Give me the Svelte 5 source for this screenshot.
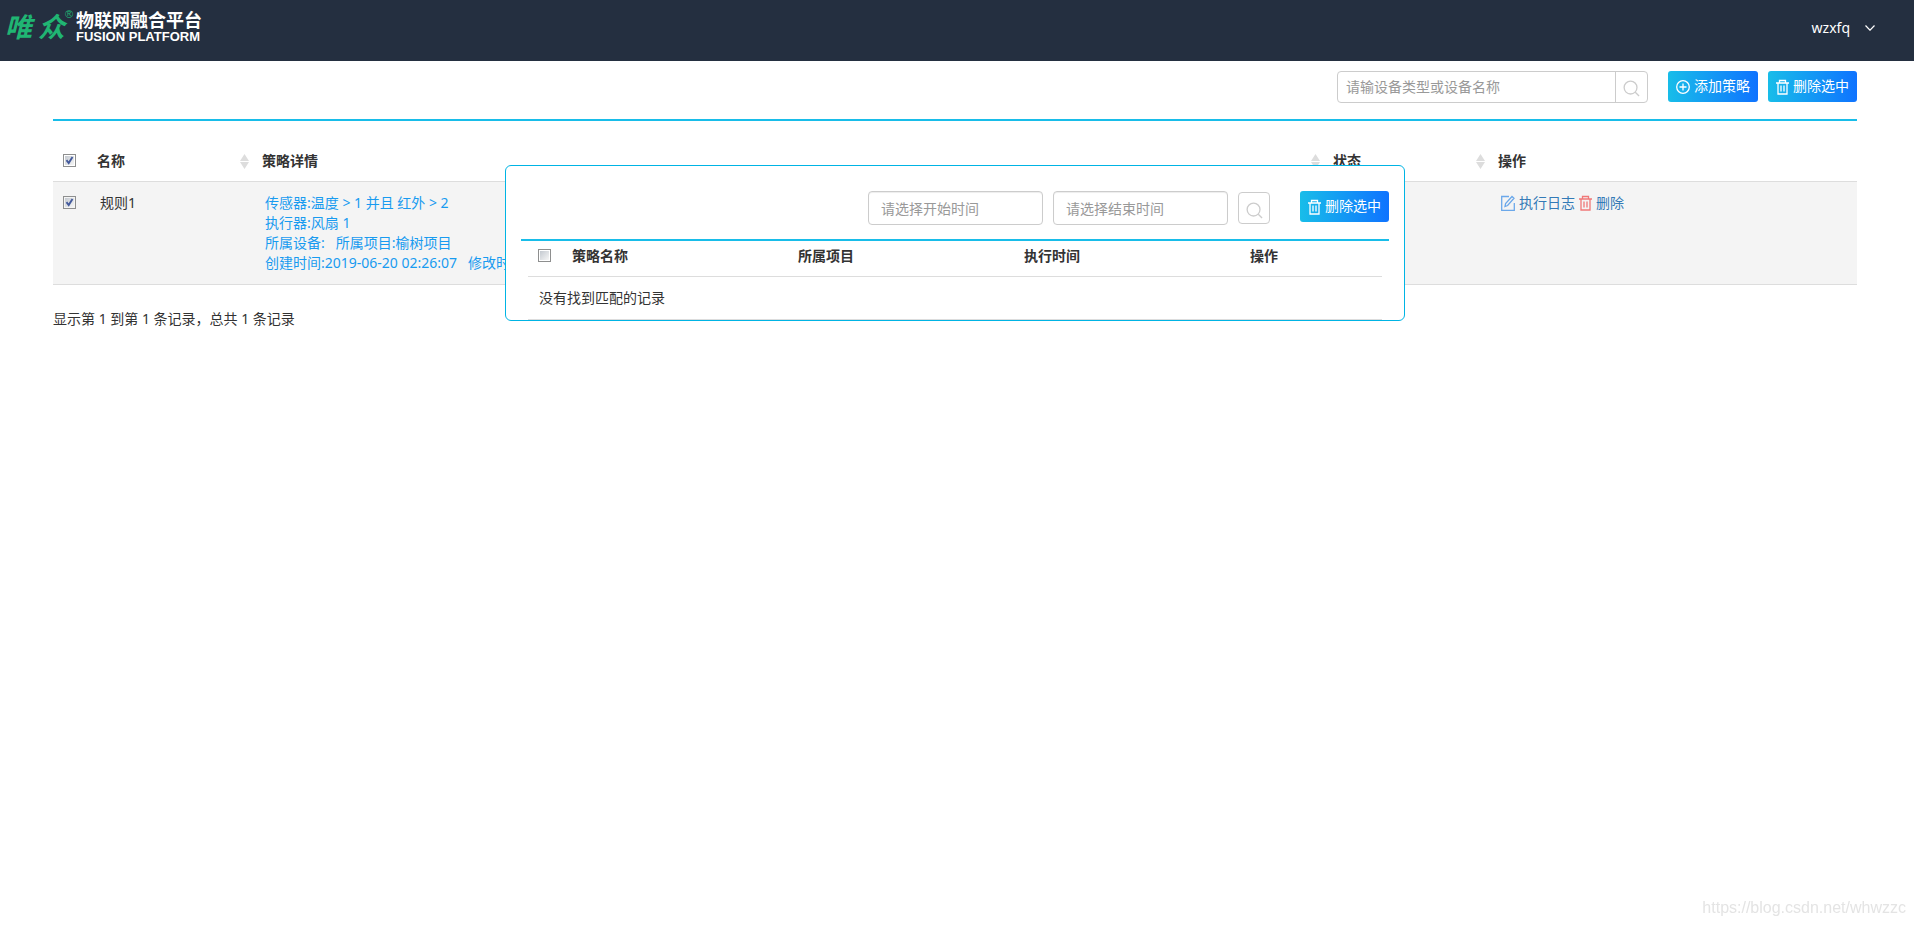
<script>
  let keyword = $state('');
  let start_time = $state('');
  let end_time = $state('');
  let log_checked = $state(false);

  let rules = $state([
    {
      id: 1,
      name: '规则1',
      checked: true,
      sensor: '温度 > 1 并且 红外 > 2',
      actuator: '风扇 1',
      device: '',
      project: '榆树项目',
      created: '2019-06-20 02:26:07',
      updated: ''
    }
  ]);

  let all_checked = $derived(rules.length > 0 && rules.every(r => r.checked));

  function toggle_all() {
    const value = !all_checked;
    rules = rules.map(r => ({ ...r, checked: value }));
  }

  function toggle_rule(id) {
    rules = rules.map(r => (r.id === id ? { ...r, checked: !r.checked } : r));
  }
</script>

{#snippet trash()}
  <svg class="icon trash" viewBox="0 0 13 16" aria-hidden="true">
    <path d="M0 4h13M3.5 4V1.5h6V4M2 4v11h9V4M5 6.500v6M8 6.500v6" />
  </svg>
{/snippet}

{#snippet magnifier()}
  <svg class="magnifier" viewBox="0 0 18 18" aria-hidden="true">
    <circle cx="8" cy="8" r="6.8" />
    <path d="M13 13l4 4" />
  </svg>
{/snippet}

{#snippet sorter()}
  <svg class="sorter" viewBox="0 0 9 15" aria-hidden="true">
    <path d="M4.5 0L9 7H0zM0 8h9l-4.5 7z" />
  </svg>
{/snippet}

<header>
  <div class="logo">
    <span class="mark">唯<span>众</span></span>
    <sup>®</sup>
    <div class="brand">
      <strong>物联网融合平台</strong>
      <b>FUSION PLATFORM</b>
    </div>
  </div>
  <button class="user" type="button">
    wzxfq
    <svg viewBox="0 0 10 6" aria-hidden="true"><path d="M.5 .5L5 5.2L9.5 .5" /></svg>
  </button>
</header>

<main>
  <div class="toolbar">
    <form class="search" onsubmit={e => e.preventDefault()}>
      <input type="text" placeholder="请输设备类型或设备名称" bind:value={keyword} aria-label="设备类型或设备名称">
      <button type="submit" aria-label="搜索">{@render magnifier()}</button>
    </form>
    <div class="buttons">
      <button class="primary" type="button">
        <svg class="icon" viewBox="0 0 14 16" aria-hidden="true">
          <circle cx="7" cy="8" r="6.3" />
          <path d="M7 4.5v7M3.5 8h7" />
        </svg>
        <span>添加策略</span>
      </button>
      <button class="primary" type="button">{@render trash()}<span>删除选中</span></button>
    </div>
  </div>

  <table class="rules">
    <thead>
      <tr>
        <th class="check"><input type="checkbox" checked={all_checked} onclick={toggle_all} aria-label="全选"></th>
        <th class="name"><div class="th-inner">名称{@render sorter()}</div></th>
        <th><div class="th-inner">策略详情{@render sorter()}</div></th>
        <th class="status"><div class="th-inner">状态{@render sorter()}</div></th>
        <th class="actions">操作</th>
      </tr>
    </thead>
    <tbody>
      {#each rules as rule (rule.id)}
        <tr>
          <td class="check">
            <input type="checkbox" checked={rule.checked} onclick={() => toggle_rule(rule.id)} aria-label={rule.name}>
          </td>
          <td>{rule.name}</td>
          <td class="detail">
            传感器:{rule.sensor}<br>
            执行器:{rule.actuator}<br>
            所属设备:{rule.device}&nbsp;&nbsp;&nbsp;所属项目:{rule.project}<br>
            创建时间:{rule.created}&nbsp;&nbsp;&nbsp;修改时间:{rule.updated}
          </td>
          <td></td>
          <td>
            <div class="links">
              <a class="edit" href="#log">
                <svg class="icon" viewBox="0 0 14 16" aria-hidden="true">
                  <path d="M8 1.5H.7v13.8h12.600V8M4 11.500l.6-3L11 1.500l2 1.800-6.400 7.200z" />
                </svg>
                <span>执行日志</span>
              </a>
              <a class="delete" href="#delete">{@render trash()}<span>删除</span></a>
            </div>
          </td>
        </tr>
      {/each}
    </tbody>
  </table>

  <p class="summary">显示第 1 到第 {rules.length} 条记录，总共 {rules.length} 条记录</p>
</main>

<div class="overlay">
  <section class="dialog" role="dialog" aria-label="执行日志">
    <form class="log-bar" onsubmit={e => e.preventDefault()}>
      <input type="text" placeholder="请选择开始时间" bind:value={start_time} aria-label="开始时间">
      <input type="text" placeholder="请选择结束时间" bind:value={end_time} aria-label="结束时间">
      <button class="find" type="submit" aria-label="搜索">{@render magnifier()}</button>
      <button class="primary" type="button">{@render trash()}<span>删除选中</span></button>
    </form>
    <div class="log-body">
      <table class="logs">
        <thead>
          <tr>
            <th class="check"><input type="checkbox" bind:checked={log_checked} aria-label="全选"></th>
            <th class="wide">策略名称</th>
            <th class="wide">所属项目</th>
            <th class="wide">执行时间</th>
            <th>操作</th>
          </tr>
        </thead>
        <tbody>
          <tr><td colspan="5">没有找到匹配的记录</td></tr>
        </tbody>
      </table>
    </div>
  </section>
</div>

<div class="watermark">https://blog.csdn.net/whwzzc</div>

<style>
  :global(body) {
    background: #fff;
    color: #333;
    font: 14px/20px 'Noto Sans', 'Noto Sans CJK SC', sans-serif;
  }

  input,
  button {
    box-sizing: border-box;
    margin: 0;
    font: inherit;
  }

  button {
    cursor: pointer;
  }

  svg {
    display: block;
    flex: none;
    fill: none;
    stroke: currentColor;
  }

  header {
    display: flex;
    justify-content: space-between;
    align-items: flex-start;
    height: 61px;
    box-sizing: border-box;
    padding: 8px 39px 0 5px;
    background: #242f40;
    color: #fff;
  }

  .logo {
    display: flex;
    align-items: flex-start;
  }

  .mark {
    display: flex;
    gap: 6px;
    color: #20b573;
    font: italic bold 27px/36px 'Noto Sans CJK SC', sans-serif;
  }

  sup {
    width: 11px;
    color: #20b573;
    font: 11px/12px 'Liberation Sans', sans-serif;
  }

  .brand {
    display: flex;
    flex-direction: column;
    color: #fff;
  }

  .brand strong {
    font: bold 18px/22px 'Noto Sans CJK SC', sans-serif;
  }

  .brand b {
    font: bold 13px/14px 'Liberation Sans', sans-serif;
  }

  .user {
    display: flex;
    align-items: center;
    gap: 15px;
    margin-top: 10px;
    padding: 0;
    border: 0;
    background: none;
    color: #fff;
  }

  .user svg {
    width: 10px;
    height: 6px;
    stroke-width: 1.2;
  }

  main {
    padding: 10px 57px 0 53px;
  }

  .toolbar {
    display: flex;
    justify-content: flex-end;
    align-items: flex-start;
    gap: 20px;
    padding-bottom: 16px;
    border-bottom: 2px solid #18bde9;
  }

  .search {
    display: flex;
    box-sizing: border-box;
    width: 311px;
    height: 32px;
    border: 1px solid #ccc;
    border-radius: 4px;
  }

  .search input {
    flex: 1;
    min-width: 0;
    padding: 0 8px;
    border: 0;
    background: none;
  }

  .search button {
    display: flex;
    justify-content: center;
    align-items: center;
    width: 32px;
    padding: 2px 0 0;
    border: 0;
    border-left: 1px solid #ccc;
    background: none;
    color: #ccc;
  }

  input::placeholder {
    color: #999;
    opacity: 1;
  }

  .buttons {
    display: flex;
    gap: 10px;
  }

  .primary {
    display: flex;
    align-items: center;
    gap: 4px;
    height: 31px;
    padding: 0 8px;
    border: 0;
    border-radius: 3px;
    background: linear-gradient(to right, #18bde9, #0f73ff);
    color: #fff;
  }

  .primary span {
    padding-bottom: 2px;
  }

  .icon {
    width: 14px;
    height: 16px;
    stroke-width: 1.3;
  }

  .trash {
    width: 13px;
  }

  .magnifier {
    width: 17px;
    height: 17px;
    stroke-width: 1.4;
  }

  table {
    width: 100%;
    border-collapse: separate;
    border-spacing: 0;
    table-layout: fixed;
  }

  th {
    padding: 9px 8px 10px;
    border-bottom: 1px solid #ddd;
    text-align: left;
    vertical-align: top;
  }

  td {
    padding: 11px;
    border-bottom: 1px solid #ddd;
    vertical-align: top;
  }

  .check {
    width: 16px;
    padding-left: 10px;
    padding-right: 10px;
  }

  input[type='checkbox'] {
    display: block;
    appearance: none;
    width: 13px;
    height: 13px;
    margin-top: 3px;
    border: 1px solid #8e8f8f;
    background: linear-gradient(135deg, #c4c9d0, #f6f6f6) content-box #f4f4f4;
    padding: 1px;
  }

  input[type='checkbox']:checked {
    background:
      url("data:image/svg+xml,%3Csvg xmlns='http://www.w3.org/2000/svg' viewBox='0 0 9 9'%3E%3Cpath d='M1.5 4.2L3.7 7L7.5 1' fill='none' stroke='%23445a9c' stroke-width='1.9'/%3E%3C/svg%3E") content-box no-repeat,
      linear-gradient(135deg, #c4c9d0, #f6f6f6) content-box #f4f4f4;
  }

  .rules {
    margin-top: 21px;
  }

  .rules tbody tr {
    background: #f4f4f4;
  }

  .rules .name,
  .rules .status {
    width: 149px;
  }

  .rules .actions {
    width: 351px;
  }

  .th-inner {
    display: flex;
    justify-content: space-between;
    align-items: flex-start;
  }

  .sorter {
    width: 9px;
    height: 15px;
    margin: 3px -3px 0 0;
    fill: #ddd;
    stroke: none;
  }

  .detail {
    color: #189bf0;
  }

  .links,
  .links a {
    display: flex;
    align-items: center;
    gap: 4px;
  }

  a {
    color: #337ab7;
    text-decoration: none;
  }

  .edit svg {
    color: #6ba8ea;
  }

  .delete svg {
    color: #f07878;
  }

  .summary {
    margin: 24px 0 0;
  }

  /* execution log, floats over the rule table */
  .overlay {
    position: absolute;
    top: 165px;
    left: 0;
    right: 4px;
    display: flex;
    justify-content: center;
    pointer-events: none;
  }

  .dialog {
    box-sizing: border-box;
    width: 900px;
    padding: 25px 15px 0;
    border: 1px solid #00b4e4;
    border-radius: 6px;
    background: #fff;
    pointer-events: auto;
  }

  .log-bar {
    display: flex;
    justify-content: flex-end;
    align-items: flex-start;
    padding-bottom: 14px;
    border-bottom: 2px solid #18bde9;
  }

  .log-bar input {
    width: 175px;
    height: 34px;
    margin-right: 10px;
    padding: 0 12px;
    border: 1px solid #ccc;
    border-radius: 4px;
    box-shadow: inset 0 1px 1px rgba(0, 0, 0, 0.075);
  }

  .log-bar .find {
    display: flex;
    justify-content: center;
    align-items: center;
    width: 32px;
    height: 32px;
    margin: 1px 30px 0 0;
    padding: 4px 0 0;
    border: 1px solid #ccc;
    border-radius: 4px;
    background: none;
    color: #ccc;
  }

  .log-body {
    padding: 0 7px;
  }

  .logs th {
    padding-top: 5px;
  }

  .logs .wide {
    width: 210px;
  }

  .watermark {
    position: fixed;
    right: 8px;
    bottom: 9px;
    color: #e4e4e4;
    font: 16px/20px 'Liberation Sans', sans-serif;
  }
</style>
